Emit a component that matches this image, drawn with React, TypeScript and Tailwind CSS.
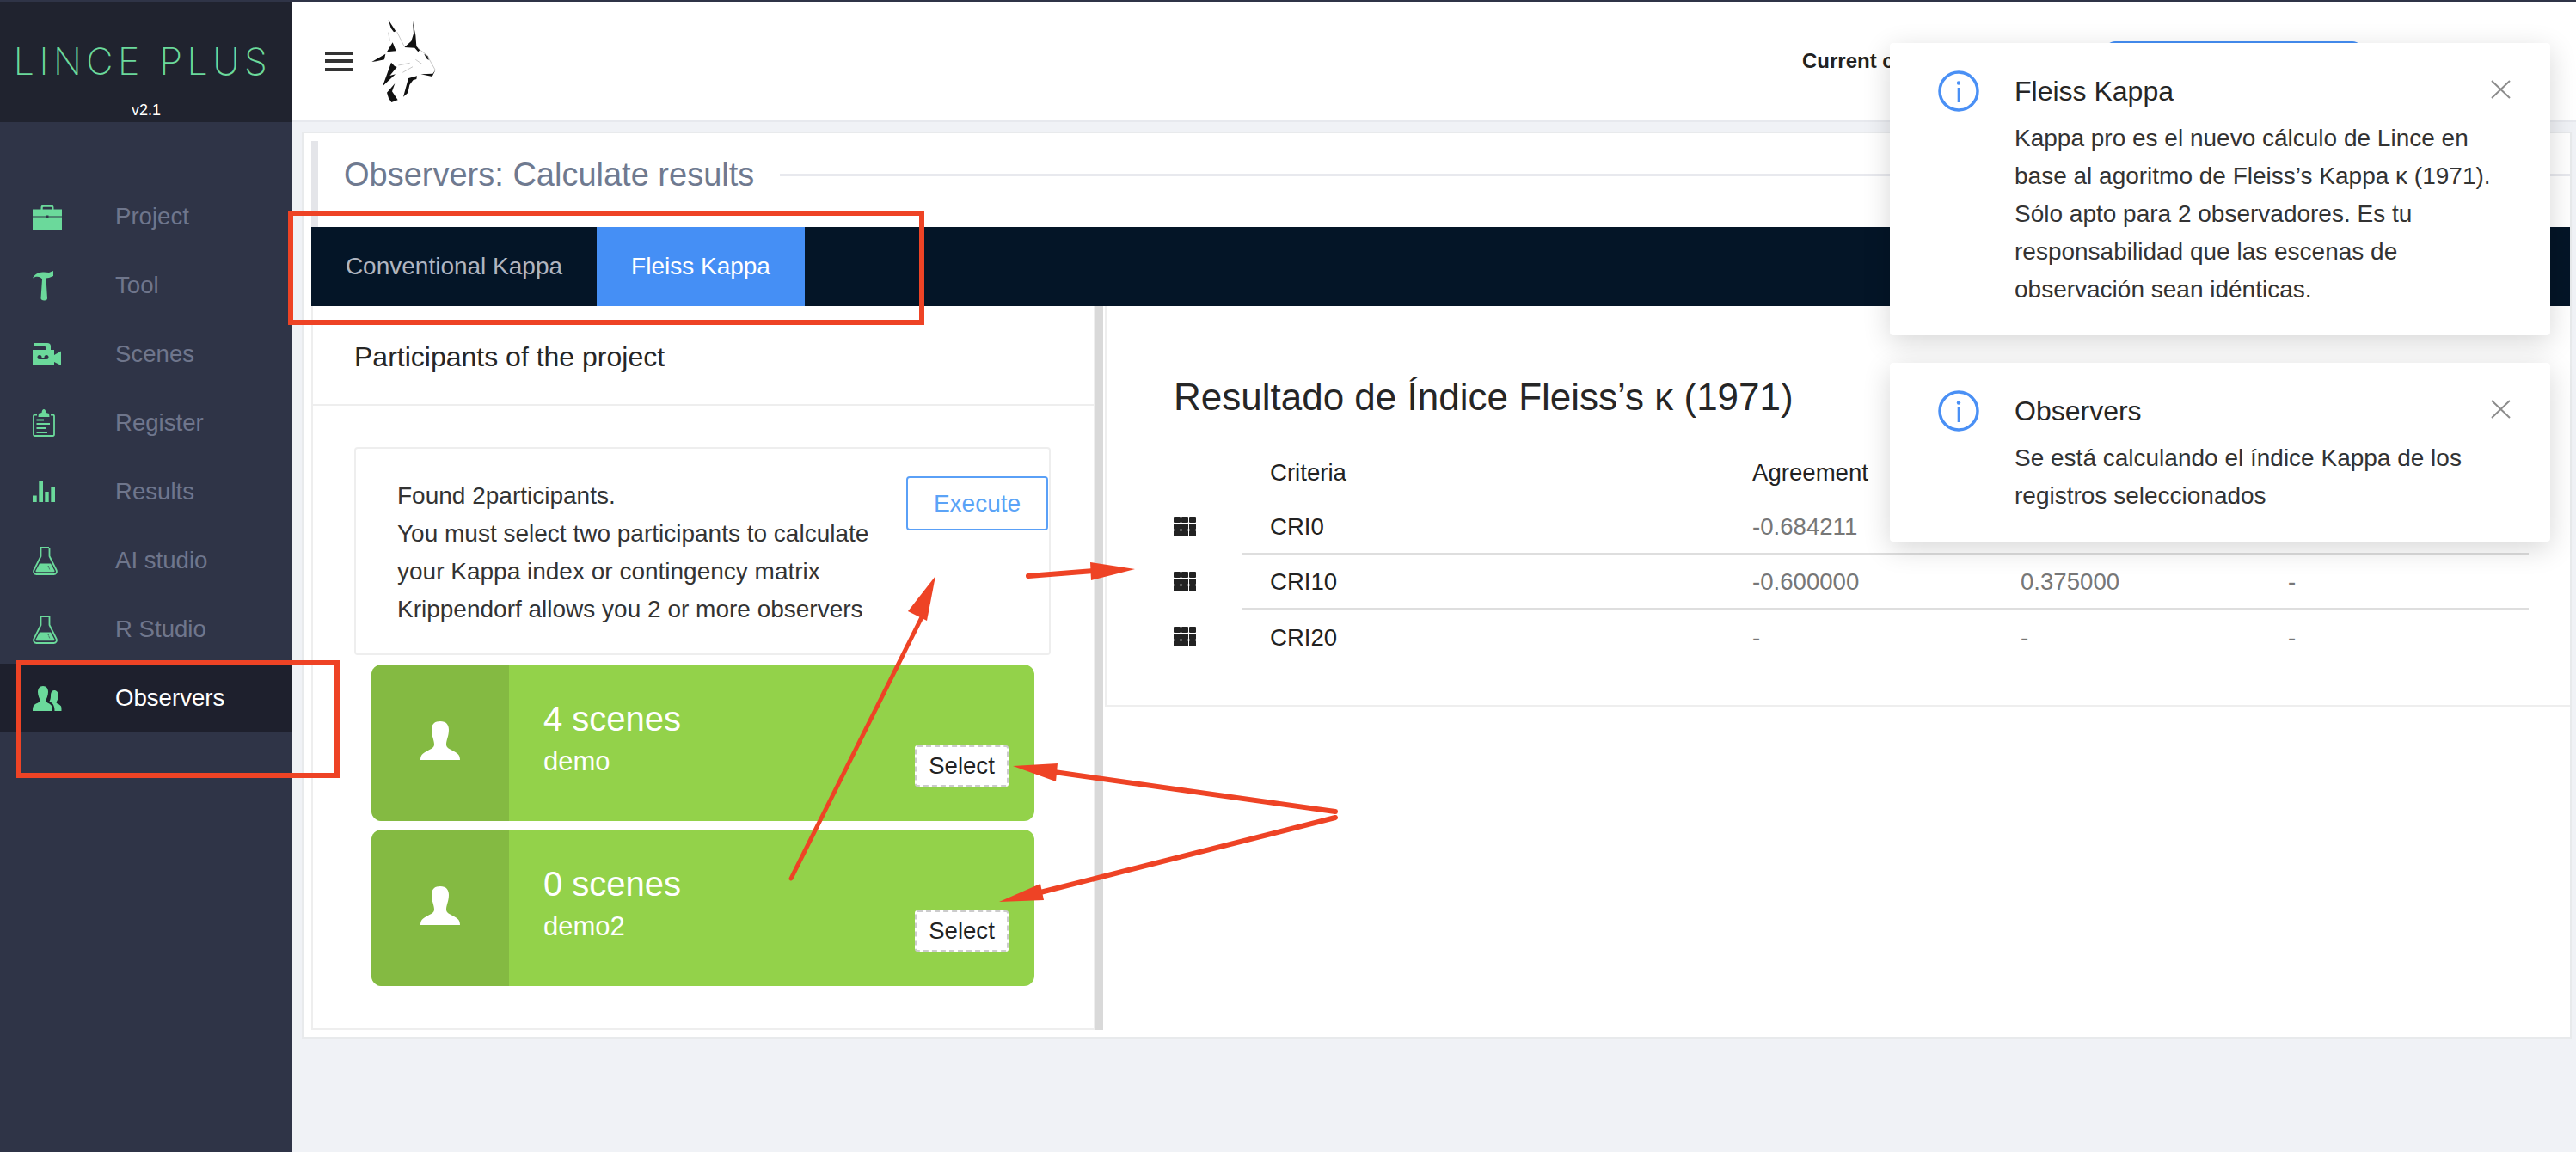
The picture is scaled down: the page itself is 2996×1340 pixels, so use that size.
import React from 'react';

const sideItems = [
  { label: 'Project', icon: BriefcaseIcon },
  { label: 'Tool', icon: HammerIcon },
  { label: 'Scenes', icon: CameraIcon },
  { label: 'Register', icon: ClipboardIcon },
  { label: 'Results', icon: ChartIcon },
  { label: 'AI studio', icon: FlaskIcon },
  { label: 'R Studio', icon: FlaskIcon },
  { label: 'Observers', icon: UsersIcon, active: true },
];

const rows = [
  { name: 'CRI0', agreement: '-0.684211', second: '', third: '' },
  { name: 'CRI10', agreement: '-0.600000', second: '0.375000', third: '-' },
  { name: 'CRI20', agreement: '-', second: '-', third: '-' },
];

const participants = [
  { scenes: '4 scenes', name: 'demo' },
  { scenes: '0 scenes', name: 'demo2' },
];

function BriefcaseIcon() {
  return (
    <svg width="34" height="29" viewBox="0 0 34 29" fill="#6bd99b">
      <path d="M9.500 6V3.500A3 3 0 0 1 12.500.5h9a3 3 0 0 1 3 3V6h-2.200V3.800a1 1 0 0 0-1-1h-8.600a1 1 0 0 0-1 1V6z" />
      <path d="M0 5.500h34V13.500H18.500V12.500h-3V13.500H0z" />
      <path d="M0 14.500h15.500V15.500h3V14.500H34V29H0z" />
    </svg>
  );
}

function HammerIcon() {
  return (
    <svg width="25" height="35" viewBox="0 0 25 35" fill="#6bd99b">
      <path d="M0 8.500C2 4 7 1 13 1.500L19 2l5-2v6l-5 2-3.500.5L17 32c0 1.500-1 2.500-3.500 2.500S9.500 33.500 9.500 32L11 10C10.500 7 4 5 0 8.500z" />
    </svg>
  );
}

function CameraIcon() {
  return (
    <svg width="34" height="27" viewBox="0 0 34 27" fill="#6bd99b">
      <path d="M2 0H17a4 4 0 0 1 4 4V8h4v6l8-4.500V26l-8-4v4H0V8h15V5a1.500 1.500 0 0 0-1.500-1.500H2z" />
      <circle cx="8" cy="16.500" r="2.500" fill="#2f3447" />
      <circle cx="16" cy="16.500" r="2.500" fill="#2f3447" />
      <rect x="8" y="17.500" width="8" height="1.500" fill="#2f3447" />
    </svg>
  );
}

function ClipboardIcon() {
  return (
    <svg width="26" height="34" viewBox="0 0 26 34" fill="none" stroke="#6bd99b" strokeWidth="1.800">
      <path d="M5 7.500H2.500a1.500 1.500 0 0 0-1.500 1.500v21.500a1.500 1.500 0 0 0 1.500 1.500h21a1.500 1.500 0 0 0 1.500-1.500V9a1.500 1.500 0 0 0-1.500-1.500H21" />
      <path d="M6.500 10l.5-4 3.500-1c.3-2.500 1.200-4 2.500-4s2.200 1.500 2.500 4l3.500 1 .5 4z" fill="#6bd99b" stroke="none" />
      <path d="M4.500 13.500H13M4.500 18H20M4.500 23H15M4.500 28H17" />
    </svg>
  );
}

function ChartIcon() {
  return (
    <svg width="26" height="24" viewBox="0 0 26 24" fill="#6bd99b">
      <path d="M0 16.500h4.700V24H0zM7.300 0H12v24H7.300zM14.300 12h4.400v12h-4.400zM21.300 7H26v17h-4.700z" />
    </svg>
  );
}

function FlaskIcon() {
  return (
    <svg width="29" height="33" viewBox="0 0 29 33" fill="none" stroke="#6bd99b" strokeWidth="1.800">
      <path d="M8 1h11M9.500 1v10L1.500 27c-1.200 2.500.5 5 3 5h20c2.500 0 4.200-2.500 3-5l-8-16V1" />
      <path d="M8 19.500h13l4.500 8.500c.3.700-.2 1.200-1 1.200H4.500c-.8 0-1.300-.5-1-1.200z" fill="#6bd99b" stroke="none" />
      <path d="M18 22l2 5" stroke="#2f3447" strokeWidth=".8" strokeDasharray="1.500 1" />
    </svg>
  );
}

function UsersIcon() {
  return (
    <svg width="34" height="29" viewBox="0 0 34 29" fill="#6bd99b">
      <path d="M12 0c4 0 6 3 6 7 0 4-2 8-3 10 0 2 5 3 7 6 1 2 1 4 1 6H0c0-2 0-4 1-6 2-3 8-4 8-6-1-2-3-6-3-10 0-4 2-7 6-7z" />
      <path d="M25 5c3 0 5 2.500 5 6 0 3-1.500 6-2.500 8 0 1.500 4 2 5.500 4.500.7 1.500.5 3.500.5 5.500h-8c0-3-.5-6-2-8-1-1.500-2.500-2-4-3 1-2 1.500-4 1.500-6.500C21 8 22 5 25 5z" />
    </svg>
  );
}

function PersonIcon() {
  return (
    <svg width="46" height="45" viewBox="0 0 46 45" fill="white">
      <path d="M23 0c7 0 10 4 10 10 0 7-3 12-3 17 0 4 4 5 9 8 5 2.500 7 5 7 10H0c0-5 2-7.500 7-10 5-3 9-4 9-8 0-5-3-10-3-17C13 4 16 0 23 0z" />
    </svg>
  );
}

function GridIcon() {
  return (
    <svg width="26" height="23" viewBox="0 0 26 23" fill="#222" className="-mt-[3px]">
      {[0, 8, 16].map(y =>
        [0, 9, 18].map(x => <rect key={`${x}-${y}`} x={x} y={y} width="8" height="7" rx="1" />)
      )}
    </svg>
  );
}

function InfoIcon() {
  return (
    <svg width="48" height="48" viewBox="0 0 48 48" fill="none" className="shrink-0">
      <circle cx="24" cy="24" r="22" stroke="#4a90f5" strokeWidth="3.500" />
      <circle cx="24" cy="14.500" r="2.200" fill="#4a90f5" />
      <rect x="22.700" y="20" width="2.600" height="17" fill="#4a90f5" />
    </svg>
  );
}

function LynxLogo() {
  return (
    <svg width="75" height="96" viewBox="96 66 225 288" className="ml-[22px] blur-[0.6px]">
      <g fill="#111">
        <path d="M155 66l26 40-7 3-10-14zM240 70l10 50 3 38 12 14-6 6-12-14-36-2 24-22 8-25z" />
        <path d="M97 213l48-28-4 20-28 6zM170 145l12 30-32 3zM280 185l14 8 2 14-8-6z" />
        <path d="M165 215l-30 83 45-42-20 5 25-30-8-3zM150 320l28-32-10 28 20 30-22 8-10-14z" />
        <path d="M255 262l-30 8-18 65 16-14 6-28 12-16 12-4zM320 240l-12 24-40-8 42-2z" />
      </g>
      <path d="M155 110l5 30M185 108l25 50M258 165l32 25 28 50M190 225l40-8M205 250l35-20M250 205l22 15" stroke="#aaa" strokeWidth="2" fill="none" />
    </svg>
  );
}

function Notification({ title, lines }: { title: string; lines: string[] }) {
  return (
    <div className="relative flex bg-white rounded-[4px] pl-[56px] pt-[32px] pb-[31px] shadow-[0_8px_32px_rgba(0,0,0,0.16)]">
      <InfoIcon />
      <div className="ml-[41px]">
        <div className="text-[32px] leading-[48px] text-[#262626]">{title}</div>
        <div className="mt-[9px] text-[28px] leading-[44px] text-[#333]">
          {lines.map(line => (
            <div key={line}>{line}</div>
          ))}
        </div>
      </div>
      <svg width="23" height="22" viewBox="0 0 23 22" stroke="#8c8c8c" strokeWidth="2" className="absolute right-[46px] top-[43px]">
        <path d="M1 1l21 20M22 1L1 21" />
      </svg>
    </div>
  );
}

function Annotations() {
  return (
    <svg width="2996" height="1340" className="absolute left-0 top-0 pointer-events-none" fill="#ee4325" stroke="none">
      <rect x="338" y="246" width="734" height="127" fill="none" stroke="#ee4325" strokeWidth="6" />
      <rect x="22" y="769" width="370" height="131" fill="none" stroke="#ee4325" strokeWidth="6" />
      <path d="M920 1020L1074 712" stroke="#ee4325" strokeWidth="5" strokeLinecap="round" />
      <path d="M1088 668l-32 41 22 11z" />
      <path d="M1196 668l76-6" stroke="#ee4325" strokeWidth="6" strokeLinecap="round" />
      <path d="M1320 660l-52-8 1 21z" />
      <path d="M1553 942L1226 896" stroke="#ee4325" strokeWidth="6" strokeLinecap="round" />
      <path d="M1178 889l52-3-2 21z" />
      <path d="M1553 949L1210 1036" stroke="#ee4325" strokeWidth="6" strokeLinecap="round" />
      <path d="M1162 1047l48-21 4 19z" />
    </svg>
  );
}

export default function App() {
  return (
    <div className="relative flex w-[2996px] h-[1340px] overflow-hidden border-t-2 border-[#2f3447] bg-[#f0f2f6] font-['Liberation_Sans',Arial,sans-serif]">
      {/* Sidebar */}
      <aside className="w-[340px] shrink-0 bg-[#2f3447]">
        <div className="h-[140px] bg-[#20232f] flex flex-col items-center">
          <div className="mt-[43px] -ml-[8px] font-['Inter',sans-serif] font-extralight text-[43px] leading-[52px] tracking-[5.500px] text-[#6bd99b] whitespace-nowrap">
            LINCE PLUS
          </div>
          <div className="mt-[20px] text-[18px] leading-[22px] text-white">v2.1</div>
        </div>
        <nav className="pt-[70px]">
          {sideItems.map(item => {
            const Icon = item.icon;
            return (
              <div key={item.label} className={`flex items-center h-[80px] pl-[38px] ${item.active ? 'bg-[#1e202d]' : ''}`}>
                <div className="w-[96px]">
                  <Icon />
                </div>
                <span className={`text-[27.600px] ${item.active ? 'text-white' : 'text-[#6f768c]'}`}>{item.label}</span>
              </div>
            );
          })}
        </nav>
      </aside>

      <div className="flex-1 min-w-0">
        {/* Top bar */}
        <header className="h-[140px] bg-white border-b-2 border-[#e7e9ee] flex items-center pl-[38px] pr-[248px]">
          <div className="w-[32px] h-[23px] flex flex-col justify-between">
            <div className="h-[4px] bg-[#333]"></div>
            <div className="h-[4px] bg-[#333]"></div>
            <div className="h-[4px] bg-[#333]"></div>
          </div>
          <LynxLogo />
          <div className="ml-auto w-[352px] text-[24px] font-bold text-[#222]">Current c</div>
          <div className="w-[300px] h-[46px] bg-[#458ff5] rounded-[12px]"></div>
        </header>

        {/* Page content */}
        <main className="pl-[11px] pr-[5px] pt-[11px]">
          <div className="bg-white border-[2px] border-[#e8eaec] pl-[9px] pt-[9px] pb-[9px] h-[1055px]">
            <div className="h-[100px] border-l-[8px] border-[#e4e5e9] pl-[30px] pb-[22px] flex items-center">
              <h1 className="text-[38px] text-[#6f7a90] whitespace-nowrap">Observers: Calculate results</h1>
              <div className="flex-1 h-[3px] bg-[#e8e9ee] ml-[30px]"></div>
            </div>

            <div className="h-[92px] bg-[#041527] flex text-[28px]">
              <div className="w-[332px] flex items-center justify-center text-[#b0b5c0]">Conventional Kappa</div>
              <div className="w-[242px] flex items-center justify-center bg-[#458ff5] text-white">Fleiss Kappa</div>
            </div>

            <div className="flex">
              {/* Participants */}
              <section className="w-[912px] h-[842px] shrink-0 border-x-2 border-b-2 border-[#eeeeee]">
                <div className="h-[116px] border-b-2 border-[#eeeeee] pl-[48px] pt-[35px] text-[32px] leading-[48px] text-[#262626]">
                  Participants of the project
                </div>
                <div className="mt-[48px] ml-[48px] mr-[50px] h-[242px] border-2 border-[#eeeeee] rounded-[4px] flex justify-between pl-[48px] pr-[1px]">
                  <div className="pt-[33px] text-[28px] leading-[44px] text-[#333] whitespace-nowrap">
                    <div>Found 2participants.</div>
                    <div>You must select two participants to calculate</div>
                    <div>your Kappa index or contingency matrix</div>
                    <div>Krippendorf allows you 2 or more observers</div>
                  </div>
                  <button className="mt-[32px] w-[165px] h-[63px] border-2 border-[#5aa0f7] rounded-[4px] text-[28px] text-[#5ba3f7]">
                    Execute
                  </button>
                </div>
                <div className="mt-[11px] ml-[68px] w-[771px] flex flex-col gap-[10px]">
                  {participants.map(p => (
                    <div key={p.name} className="h-[182px] flex rounded-[12px] overflow-hidden bg-[#93d24a]">
                      <div className="w-[160px] pb-[5px] bg-[#84ba42] flex items-center justify-center">
                        <PersonIcon />
                      </div>
                      <div className="flex-1 flex justify-between pl-[40px] pr-[30px]">
                        <div className="pt-[38px] text-white">
                          <div className="text-[40px] leading-[50px]">{p.scenes}</div>
                          <div className="text-[31px] leading-[50px]">{p.name}</div>
                        </div>
                        <button className="mt-[94px] w-[109px] h-[48px] bg-white border-2 border-dashed border-[#cccccc] rounded-[3px] text-[27.600px] text-[#222]">
                          Select
                        </button>
                      </div>
                    </div>
                  ))}
                </div>
              </section>

              <div className="w-[9px] h-[842px] shrink-0 bg-[#d9d9d9]"></div>

              {/* Results */}
              <section className="flex-1 h-[466px] ml-[2px] border-l-2 border-b-2 border-[#eeeeee] pl-[78px] pr-[48px] pt-[76px]">
                <h2 className="text-[44px] leading-[60px] text-[#262626] whitespace-nowrap">Resultado de Índice Fleiss’s κ (1971)</h2>
                <div className="mt-[26px] text-[27.600px] text-[#222]">
                  <div className="h-[64px] flex items-center pl-[112px]">
                    <div className="w-[561px]">Criteria</div>
                    <div>Agreement</div>
                  </div>
                  {rows.map((row, index) => (
                    <div key={row.name} className="flex h-[64px]">
                      <div className="w-[80px] flex items-center">
                        <GridIcon />
                      </div>
                      <div className={`flex-1 flex items-center pl-[32px] ${index < 2 ? 'border-b-[3px] border-[#dedede]' : ''}`}>
                        <div className="w-[561px]">{row.name}</div>
                        <div className="w-[312px] text-[#777]">{row.agreement}</div>
                        <div className="w-[311px] text-[#777]">{row.second}</div>
                        <div className="text-[#777]">{row.third}</div>
                      </div>
                    </div>
                  ))}
                </div>
              </section>
            </div>
          </div>
        </main>
      </div>

      {/* Notifications */}
      <div className="absolute right-[30px] top-[48px] w-[768px] flex flex-col gap-[32px]">
        <Notification
          title="Fleiss Kappa"
          lines={[
            'Kappa pro es el nuevo cálculo de Lince en',
            'base al agoritmo de Fleiss’s Kappa κ (1971).',
            'Sólo apto para 2 observadores. Es tu',
            'responsabilidad que las escenas de',
            'observación sean idénticas.',
          ]}
        />
        <Notification title="Observers" lines={['Se está calculando el índice Kappa de los', 'registros seleccionados']} />
      </div>

      <Annotations />
    </div>
  );
}
